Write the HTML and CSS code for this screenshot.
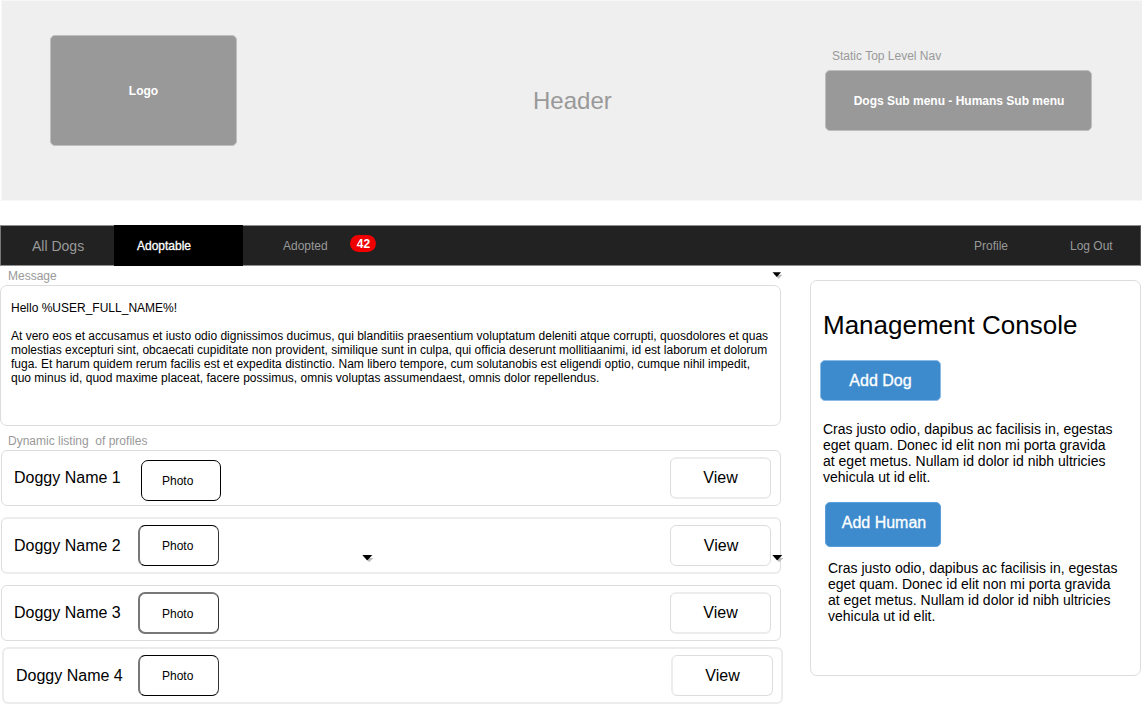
FILE: index.html
```html
<!DOCTYPE html>
<html lang="en">
<head>
<meta charset="utf-8">
<title>Dog Adoption Console</title>
<link rel="stylesheet" href="styles.css">
</head>
<body>
<header class="header">
  <div class="logo">Logo</div>
  <h1 class="header-title">Header</h1>
  <div class="top-nav">
    <div class="top-nav-label">Static Top Level Nav</div>
    <div class="top-nav-menu">Dogs Sub menu - Humans Sub menu</div>
  </div>
</header>
<nav class="navbar">
  <a class="tab tab-all">All Dogs</a>
  <a class="tab tab-active">Adoptable</a>
  <a class="tab tab-adopted">Adopted</a>
  <span class="badge">42</span>
  <a class="tab tab-profile">Profile</a>
  <a class="tab tab-logout">Log Out</a>
</nav>
<main class="main">
  <section class="content">
    <div class="label label-message">Message</div>
    <div class="message">
      <p>Hello %USER_FULL_NAME%!</p>
      <p>At vero eos et accusamus et iusto odio dignissimos ducimus, qui blanditiis praesentium voluptatum deleniti atque corrupti, quosdolores et quas<br>molestias excepturi sint, obcaecati cupiditate non provident, similique sunt in culpa, qui officia deserunt mollitiaanimi, id est laborum et dolorum<br>fuga. Et harum quidem rerum facilis est et expedita distinctio. Nam libero tempore, cum solutanobis est eligendi optio, cumque nihil impedit,<br>quo minus id, quod maxime placeat, facere possimus, omnis voluptas assumendaest, omnis dolor repellendus.</p>
    </div>
    <div class="label label-list">Dynamic listing&nbsp; of profiles</div>
    <div class="row row-1"><span class="name">Doggy Name 1</span><span class="photo">Photo</span><span class="view">View</span></div>
    <div class="row row-2"><span class="name">Doggy Name 2</span><span class="photo">Photo</span><span class="view">View</span></div>
    <div class="row row-3"><span class="name">Doggy Name 3</span><span class="photo">Photo</span><span class="view">View</span></div>
    <div class="row row-4"><span class="name">Doggy Name 4</span><span class="photo">Photo</span><span class="view">View</span></div>
  </section>
  <aside class="console">
    <h2 class="console-title">Management Console</h2>
    <div class="button button-dog">Add Dog</div>
    <p class="console-text">Cras justo odio, dapibus ac facilisis in, egestas<br>eget quam. Donec id elit non mi porta gravida<br>at eget metus. Nullam id dolor id nibh ultricies<br>vehicula ut id elit.</p>
    <div class="button button-human">Add Human</div>
    <p class="console-text console-text-human">Cras justo odio, dapibus ac facilisis in, egestas<br>eget quam. Donec id elit non mi porta gravida<br>at eget metus. Nullam id dolor id nibh ultricies<br>vehicula ut id elit.</p>
  </aside>
</main>
<svg class="caret caret-message" width="12" height="8" viewBox="0 0 12 8"><path d="M4 4h6L6.5 7.5z" fill="#bbb" stroke="#bbb" stroke-width=".6"/><path d="M0.5 1.2h8.5L4.75 6z" fill="#000"/></svg>
<svg class="caret caret-list" width="12" height="9" viewBox="0 0 12 9"><path d="M4 4h7.5L7 8.2z" fill="#bbb"/><path d="M0.3 1h10L5.2 6.5z" fill="#000"/></svg>
<svg class="caret caret-row" width="12" height="9" viewBox="0 0 12 9"><path d="M4 4h7.5L7 8.2z" fill="#bbb"/><path d="M0.3 1h10L5.2 6.5z" fill="#000"/></svg>
</body>
</html>
```
FILE: styles.css
```css
* { box-sizing: border-box; }
body {
  margin: 0;
  width: 1142px;
  height: 704px;
  overflow: hidden;
  background: #fff;
  color: #000;
  font: 12px/14px "Liberation Sans", Arial, sans-serif;
  white-space: nowrap;
}
h1, h2, p { margin: 0; font-weight: normal; }

.header {
  display: flex;
  height: 201px;
  margin-left: 1px;
  padding: 34px 50px 0 48px;
  background: #efefef;
  border: 1px solid #f7f7f7;
  border-right: 0;
  color: #999;
}
.logo, .top-nav-menu {
  display: flex;
  align-items: center;
  justify-content: center;
  background: #999;
  border: 1px solid #bebebe;
  border-radius: 5px;
  color: #fff;
  font-weight: bold;
}
.logo { width: 187px; height: 111px; }
.header-title {
  width: 79px;
  margin: 52px 0 0 296px;
  font-size: 24px;
  line-height: 28px;
}
.top-nav { width: 267px; margin: 14px 0 0 213px; }
.top-nav-label { padding-left: 7px; }
.top-nav-menu { height: 61px; margin-top: 7px; padding-left: 1px; }

.navbar {
  display: flex;
  height: 41px;
  margin: 24px 1px 0 0;
  background: #222;
  border: 1px solid #909090;
  border-left-color: #777;
  border-right-color: #555;
}
.tab { line-height: 41px; color: #999; }
.tab-all { width: 113px; padding-left: 31px; font-size: 14px; }
.tab-active {
  width: 129px;
  margin: -1px 0;
  padding: 1px 0 0 23px;
  background: #000;
  color: #fff;
  -webkit-text-stroke: 0.3px #fff;
}
.tab-adopted { width: 107px; padding-left: 40px; }
.badge {
  width: 26px;
  height: 17px;
  margin-top: 9px;
  padding-left: 1px;
  border-radius: 9px;
  background: #f00000;
  color: #fff;
  font-weight: bold;
  line-height: 18px;
  text-align: center;
}
.tab-profile { width: 96px; margin-left: 598px; }
.tab-logout { width: 60px; }

.main { display: flex; }
.content { width: 810px; }
.label { padding-left: 8px; color: #999; }
.label-message { height: 19px; padding-top: 3px; }
.message {
  width: 781px;
  height: 141px;
  padding: 15px 10px;
  border: 1px solid #ddd;
  border-radius: 7px;
}
.message p + p { margin-top: 14px; }
.label-list { height: 24px; padding-top: 8px; }

.row {
  display: flex;
  width: 780px;
  height: 56px;
  margin-left: 1px;
  border: 1px solid #ddd;
  border-radius: 6px;
}
.row-2, .row-4 {
  height: 57px;
  border-width: 2px 1px;
  border-top-color: #ececec;
  border-bottom-color: #ececec;
}
.row-2 { margin-top: 11px; }
.row-3 { margin-top: 11px; }
.row-4 { width: 781px; margin: 6px 0 0 2px; border-width: 2px; border-color: #ececec; }
.name { width: 139px; padding: 18px 0 0 12px; font-size: 16px; line-height: 18px; }
.row-2 .name, .row-3 .name { width: 136px; }
.row-4 .name { width: 134px; }
.photo {
  width: 80px;
  height: 41px;
  margin-top: 9px;
  padding-left: 20px;
  border: 1px solid #000;
  border-radius: 7px;
  line-height: 40px;
}
.row-2 .photo, .row-3 .photo, .row-4 .photo {
  width: 81px;
  margin-top: 6px;
  padding-left: 22px;
  border-width: 1px 1px 1px 2px;
  border-color: #000 #333 #000 #777;
}
.row-3 .photo {
  height: 42px;
  line-height: 40px;
  border-width: 2px 1px 2px 2px;
  border-color: #777 #333 #777 #777;
}
.view {
  width: 101px;
  height: 41px;
  margin: 6px 0 0 451px;
  border: 1px solid #ddd;
  border-radius: 6px;
  font-size: 16px;
  line-height: 40px;
  text-align: center;
}
.row-1 .view, .row-3 .view {
  height: 42px;
  border-width: 2px 1px;
  border-color: #ececec #ddd;
  line-height: 38px;
}
.row-1 .view { margin-left: 449px; }
.row-2 .view { padding-left: 1px; }
.row-4 .view { width: 102px; margin-left: 452px; border-left: 2px solid #ececec; }

.console {
  width: 331px;
  height: 396px;
  margin-top: 14px;
  padding: 29px 0 0 9px;
  border: 1px solid #ddd;
  border-radius: 7px;
}
.console-title { padding-left: 3px; font-size: 26px; line-height: 30px; }
.button {
  background: #3d8bcd;
  border: 1px solid #8dbbe8;
  border-radius: 5px;
  color: #fff;
  font-size: 16px;
  text-align: center;
  -webkit-text-stroke: 0.3px #fff;
}
.button-dog { width: 121px; height: 41px; margin-top: 20px; line-height: 39px; }
.console-text { margin-top: 20px; padding-left: 3px; font-size: 14px; line-height: 16px; }
.button-human {
  width: 116px;
  height: 45px;
  margin: 17px 0 0 5px;
  padding-left: 2px;
  border-color: #5b9ed9;
  line-height: 39px;
}
.console-text-human { margin-top: 13px; padding-left: 8px; }

.caret { position: absolute; }
.caret-message { left: 772px; top: 271px; }
.caret-list { left: 362px; top: 554px; }
.caret-row { left: 772px; top: 554px; }
```
